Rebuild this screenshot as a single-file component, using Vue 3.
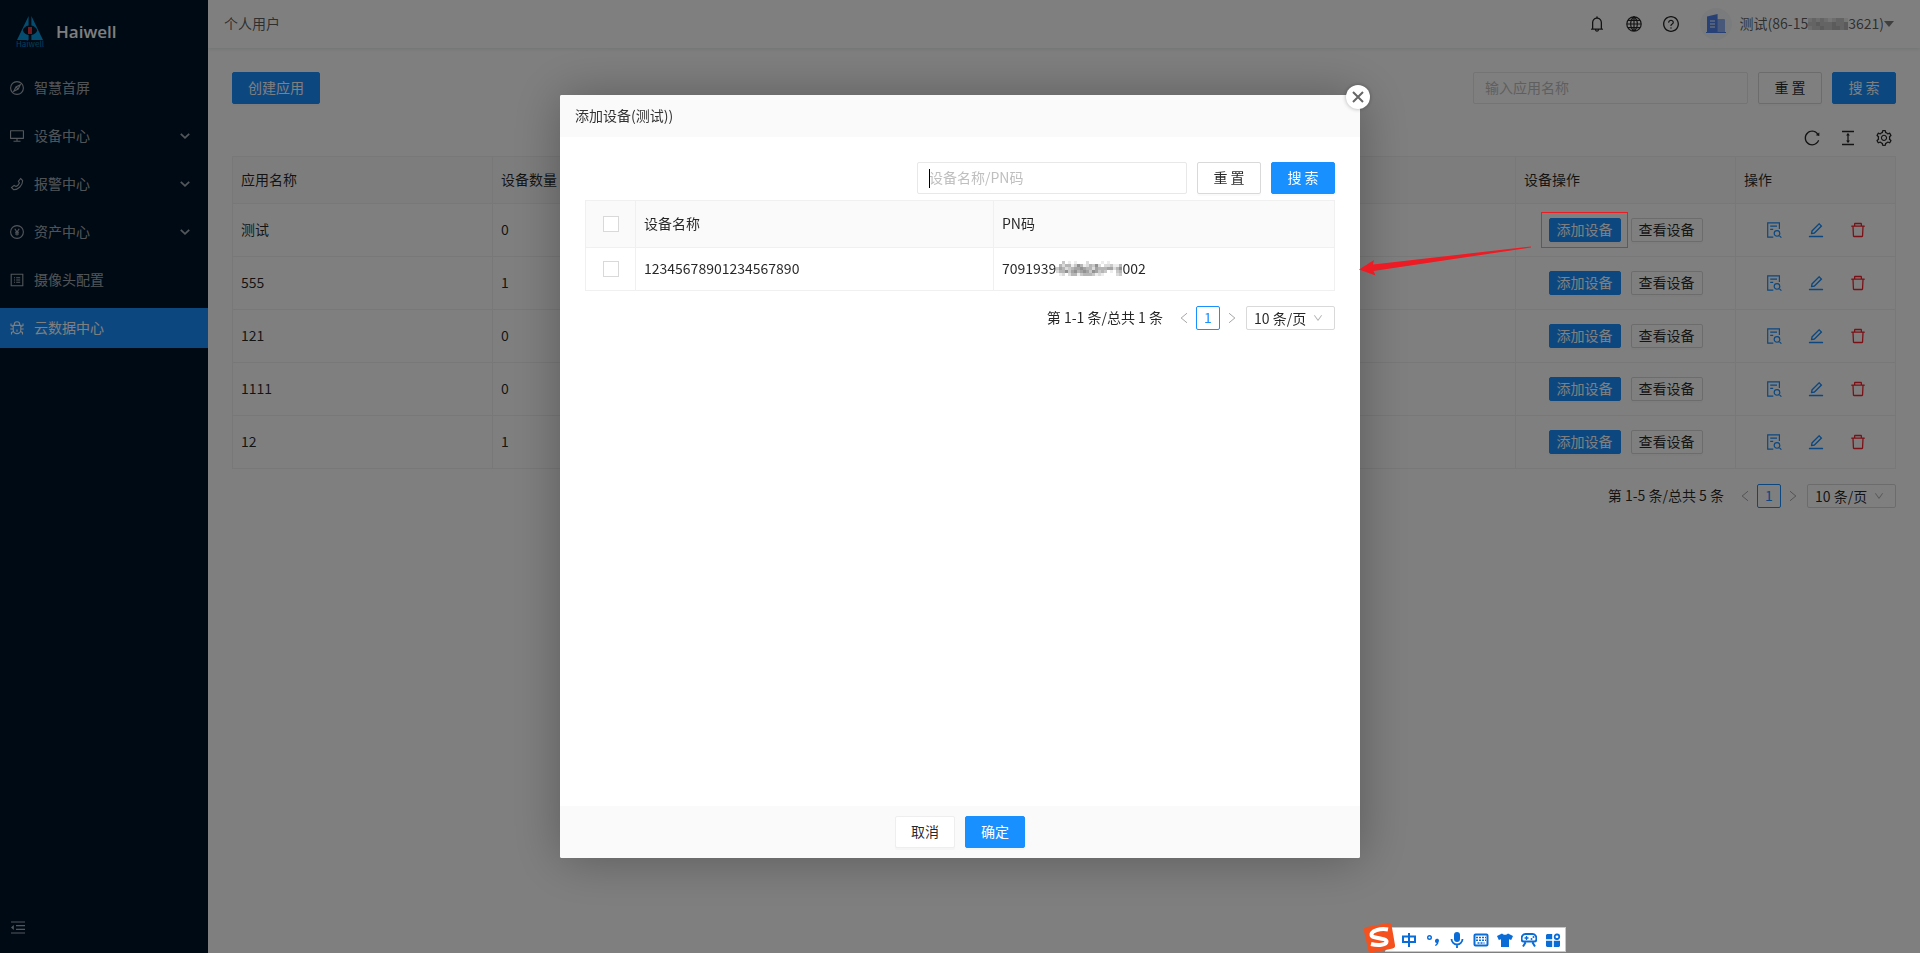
<script setup>
import { h, ref } from 'vue'

const F = '64 64 896 896'
const icons = {
  bell: { box: F, fill: 'M816 768h-24V428c0-141.1-104.3-257.8-240-277.2V112c0-22.1-17.9-40-40-40s-40 17.9-40 40v38.8C336.3 170.2 232 286.9 232 428v340h-24c-17.7 0-32 14.3-32 32v32c0 4.4 3.6 8 8 8h216c0 61.8 50.2 112 112 112s112-50.2 112-112h216c4.4 0 8-3.6 8-8v-32c0-17.7-14.3-32-32-32zM512 888c-26.5 0-48-21.5-48-48h96c0 26.5-21.5 48-48 48zM304 768V428c0-55.6 21.6-107.8 60.9-147.1S456.4 220 512 220c55.6 0 107.8 21.6 147.1 60.9S720 372.4 720 428v340H304z' },
  help: { box: F, fill: 'M512 64C264.6 64 64 264.6 64 512s200.6 448 448 448 448-200.6 448-448S759.4 64 512 64zm0 820c-205.4 0-372-166.6-372-372s166.6-372 372-372 372 166.6 372 372-166.6 372-372 372zM623.6 316.7C593.6 290.4 554 276 512 276s-81.6 14.5-111.6 40.7C369.2 344 352 380.7 352 420v7.6c0 4.4 3.6 8 8 8h48c4.4 0 8-3.6 8-8V420c0-44.1 43.1-80 96-80s96 35.9 96 80c0 31.1-22 59.6-56.1 72.7-21.2 8.1-39.2 22.3-52.1 40.9-13.1 19-19.9 41.8-19.9 64.9V620c0 4.4 3.6 8 8 8h48c4.4 0 8-3.6 8-8v-22.7a48.3 48.3 0 0 1 30.9-44.8c59-22.7 97.1-74.7 97.1-132.5.1-39.3-17.1-76-48.3-103.3zM472 732a40 40 0 1 0 80 0 40 40 0 1 0-80 0z' },
  globe: { box: '0 0 16 16', stroke: 'M8 .8a7.2 7.2 0 1 0 0 14.4A7.2 7.2 0 1 0 8 .8zM8 .8C3.6 4 3.6 12 8 15.2M8 .8c4.4 3.2 4.4 11.2 0 14.4M8 .8v14.4M.8 8h14.4M2 4.3h12M2 11.7h12', width: 1.2 },
  reload: { box: F, fill: 'M909.1 209.3l-56.4 44.1C775.8 155.1 656.2 92 521.9 92 290 92 102.3 279.5 102 511.5 101.7 743.7 289.8 932 521.9 932c181.3 0 335.8-115 394.6-276.1 1.5-4.2-.7-8.9-4.9-10.3l-56.7-19.5a8 8 0 0 0-10.1 4.8c-1.8 5-3.8 10-5.9 14.9-17.3 41-42.1 77.8-73.7 109.4A344.77 344.77 0 0 1 655.9 829c-42.3 17.9-87.4 27-133.8 27-46.5 0-91.5-9.1-133.8-27A341.5 341.5 0 0 1 279 755.2a342.16 342.16 0 0 1-73.7-109.4c-17.9-42.4-27-87.4-27-133.9s9.1-91.5 27-133.9c17.3-41 42.1-77.8 73.7-109.4 31.6-31.6 68.4-56.4 109.3-73.8 42.3-17.9 87.4-27 133.8-27 46.5 0 91.5 9.1 133.8 27a341.5 341.5 0 0 1 109.3 73.8c9.9 9.9 19.2 20.4 27.8 31.4l-60.2 47a8 8 0 0 0 3 14.1l175.6 43c5 1.2 9.9-2.6 9.9-7.7l.8-180.9c-.1-6.6-7.8-10.3-13-6.2z' },
  height: { box: F, fill: 'M840 836H184c-4.4 0-8 3.6-8 8v60c0 4.4 3.6 8 8 8h656c4.4 0 8-3.6 8-8v-60c0-4.4-3.6-8-8-8zm0-724H184c-4.4 0-8 3.6-8 8v60c0 4.4 3.6 8 8 8h656c4.4 0 8-3.6 8-8v-60c0-4.4-3.6-8-8-8zM610.8 378c6 0 9.4-7 5.7-11.7L515.7 238.7a7.14 7.14 0 0 0-11.3 0L403.6 366.3a7.23 7.23 0 0 0 5.7 11.7H476v268h-62.8c-6 0-9.4 7-5.7 11.7l100.8 127.5c2.9 3.7 8.5 3.7 11.3 0l100.8-127.5c3.7-4.7.4-11.7-5.7-11.7H548V378h62.8z' },
  setting: { box: F, fill: 'M924.8 625.7l-65.5-56c3.1-19 4.7-38.4 4.7-57.8s-1.6-38.8-4.7-57.8l65.5-56a32.03 32.03 0 0 0 9.3-35.2l-.9-2.6a443.74 443.74 0 0 0-79.7-137.9l-1.8-2.1a32.12 32.12 0 0 0-35.1-9.5l-81.3 28.9c-30-24.6-63.5-44-99.7-57.6l-15.7-85a32.05 32.05 0 0 0-25.8-25.7l-2.7-.5c-52.1-9.4-106.9-9.4-159 0l-2.7.5a32.05 32.05 0 0 0-25.8 25.7l-15.8 85.4a351.86 351.86 0 0 0-99 57.4l-81.9-29.1a32 32 0 0 0-35.1 9.5l-1.8 2.1a446.02 446.02 0 0 0-79.7 137.9l-.9 2.6c-4.5 12.5-.8 26.5 9.3 35.2l66.3 56.6c-3.1 18.8-4.6 38-4.6 57.1 0 19.2 1.5 38.4 4.6 57.1L99 625.5a32.03 32.03 0 0 0-9.3 35.2l.9 2.6c18.1 50.4 44.9 96.9 79.7 137.9l1.8 2.1a32.12 32.12 0 0 0 35.1 9.5l81.9-29.1c29.8 24.5 63.1 43.9 99 57.4l15.8 85.4a32.05 32.05 0 0 0 25.8 25.7l2.7.5a449.4 449.4 0 0 0 159 0l2.7-.5a32.05 32.05 0 0 0 25.8-25.7l15.7-85a350 350 0 0 0 99.7-57.6l81.3 28.9a32 32 0 0 0 35.1-9.5l1.8-2.1c34.8-41.1 61.6-87.5 79.7-137.9l.9-2.6c4.5-12.3.8-26.3-9.3-35zM788.3 465.9c2.5 15.1 3.8 30.6 3.8 46.1s-1.3 31-3.8 46.1l-6.6 40.1 74.7 63.9a370.03 370.03 0 0 1-42.6 73.6L721 702.8l-31.4 25.8c-23.9 19.6-50.5 35-79.3 45.8l-38.1 14.3-17.9 97a377.5 377.5 0 0 1-85 0l-17.9-97.2-37.8-14.5c-28.5-10.8-55-26.2-78.7-45.7l-31.4-25.9-93.4 33.2c-17-22.9-31.2-47.6-42.6-73.6l75.5-64.5-6.5-40c-2.4-14.9-3.7-30.3-3.7-45.5 0-15.3 1.2-30.6 3.7-45.5l6.5-40-75.5-64.5c11.3-26.1 25.6-50.7 42.6-73.6l93.4 33.2 31.4-25.9c23.7-19.5 50.2-34.9 78.7-45.7l37.9-14.3 17.9-97.2c28.1-3.2 56.8-3.2 85 0l17.9 97 38.1 14.3c28.7 10.8 55.4 26.2 79.3 45.8l31.4 25.8 92.8-32.9c17 22.9 31.2 47.6 42.6 73.6L781.8 426l6.5 39.9zM512 326c-97.2 0-176 78.8-176 176s78.8 176 176 176 176-78.8 176-176-78.8-176-176-176zm79.2 255.2A111.6 111.6 0 0 1 512 614c-29.9 0-58-11.7-79.2-32.8A111.6 111.6 0 0 1 400 502c0-29.9 11.7-58 32.8-79.2C454 401.6 482.1 390 512 390c29.9 0 58 11.6 79.2 32.8A111.6 111.6 0 0 1 624 502c0 29.9-11.7 58-32.8 79.2z' },
  trash: { box: F, fill: 'M360 184h-8c4.4 0 8-3.6 8-8v8h304v-8c0 4.4 3.6 8 8 8h-8v72h72v-80c0-35.3-28.7-64-64-64H352c-35.3 0-64 28.7-64 64v80h72v-72zm504 72H160c-17.7 0-32 14.3-32 32v32c0 4.4 3.6 8 8 8h60.4l24.7 523c1.6 34.1 29.8 61 63.9 61h454c34.2 0 62.3-26.8 63.9-61l24.7-523H888c4.4 0 8-3.6 8-8v-32c0-17.7-14.3-32-32-32zM731.3 840H292.7l-24.2-512h487l-24.2 512z' },
  edit: { box: F, fill: 'M257.7 752c2 0 4-.2 6-.5L431.9 722c2-.4 3.9-1.3 5.3-2.8l423.9-423.9a9.96 9.96 0 0 0 0-14.1L694.9 114.9c-1.9-1.9-4.4-2.9-7.1-2.9s-5.2 1-7.1 2.9L256.8 538.8c-1.5 1.5-2.4 3.3-2.8 5.3l-29.5 168.2a33.5 33.5 0 0 0 9.4 29.8c6.6 6.4 14.9 9.9 23.8 9.9zm67.4-174.4L687.8 215l73.3 73.3-362.7 362.6-88.9 15.7 15.6-89zM880 836H144c-17.7 0-32 14.3-32 32v36c0 4.4 3.6 8 8 8h784c4.4 0 8-3.6 8-8v-36c0-17.7-14.3-32-32-32z' },
  search: { box: '0 0 16 16', stroke: 'M13.4 7V.9H1.7v14.2h5.6M4.2 4.2h6.8M4.2 7.3h3M11 8.6a2.8 2.8 0 1 0 0 5.6 2.8 2.8 0 1 0 0-5.6zM13 13.4l2.4 2.2', width: 1.2 },
  down: { box: F, fill: 'M884 256h-75c-5.1 0-9.9 2.5-12.9 6.6L512 654.2 227.9 262.6c-3-4.1-7.8-6.6-12.9-6.6h-75c-6.5 0-10.3 7.4-6.5 12.7l352.6 486.1c12.8 17.6 39 17.6 51.7 0l352.6-486.1c3.9-5.3.1-12.7-6.4-12.7z' },
  chevron: { box: '0 0 10 10', stroke: 'M.8 2.8 5 6.8 9.2 2.8', width: 1.8 },
  prev: { box: '0 0 12 12', stroke: 'M9 1.2 3.200 6 9 10.8', width: 1 },
  next: { box: '0 0 12 12', stroke: 'M3 1.2 8.800 6 3 10.8', width: 1 },
  compass: { box: '0 0 14 14', stroke: 'M7 .6a6.4 6.4 0 1 0 0 12.8A6.4 6.4 0 1 0 7 .6zM10.3 3.8 8.2 8 3.8 10.3 6 6zM6.2 6.2l1.8 1.8', width: 1.1 },
  desktop: { box: F, fill: 'M928 140H96c-17.7 0-32 14.3-32 32v496c0 17.7 14.3 32 32 32h380v112H304c-8.8 0-16 7.2-16 16v48c0 4.4 3.6 8 8 8h432c4.4 0 8-3.6 8-8v-48c0-8.8-7.2-16-16-16H548V700h380c17.7 0 32-14.3 32-32V172c0-17.7-14.3-32-32-32zm-40 488H136V212h752v416z' },
  phone: { box: '0 0 14 14', stroke: 'M10.6 1.5 12.7 3.6C12.6 8.6 8.3 12.6 3.6 12.7L1.5 10.6 4.2 8.4 6 9.4C7.5 8.8 8.8 7.5 9.4 6L8.4 4.2z', width: 1.1 },
  yuan: { box: '0 0 14 14', stroke: 'M7 .6a6.4 6.4 0 1 0 0 12.8A6.4 6.4 0 1 0 7 .6zM4.8 3.8 7 7l2.2-3.2M7 7v3.6M5 7.3h4M5 9h4', width: 1.1 },
  profile: { box: '0 0 14 14', stroke: 'M1.2 1.2h11.6v11.6H1.2zM4 4.8h1M6.2 4.8h4M4 7h1M6.2 7h4M4 9.2h1M6.2 9.2h4', width: 1.1 },
  bug: { box: '0 0 14 14', stroke: 'M4.3 4.2V3.4a2.7 2.7 0 0 1 5.4 0v.8M3.2 4.4h7.6v4.4a3.8 3.8 0 0 1-7.6 0zM3.2 5.5 1 4.6V2.4M10.8 5.5 13 4.6V2.4M.3 8h2.9M10.8 8h2.9M3.6 10.4 1.5 11.4v2M10.4 10.4l2.1 1v2M7 8.4v2.4', width: 1.1 },
  fold: { box: '0 0 16 16', stroke: 'M1 2h14M6 5.6h9M6 9.4h9M1 13h14', fill: 'M3.8 5v5L1 7.5z', width: 1.2 }
}

const Icon = ({ name }) => {
  const d = icons[name]
  return h('svg', { viewBox: d.box, 'aria-hidden': 'true' }, [
    d.fill && h('path', { d: d.fill, fill: 'currentColor' }),
    d.stroke && h('path', { d: d.stroke, fill: 'none', stroke: 'currentColor', 'stroke-width': d.width })
  ])
}
Icon.props = ['name']

// Pixelated strip hiding private digits: each digit is a darkness level.
const Mosaic = ({ rows, cell }) =>
  h('svg', { width: rows[0].length * cell, height: rows.length * cell, 'aria-hidden': 'true' },
    rows.flatMap((row, y) => [...row].map((v, x) =>
      h('rect', { x: x * cell, y: y * cell, width: cell, height: cell, fill: '#000', 'fill-opacity': Number(v) / 14 }))))
Mosaic.props = ['rows', 'cell']

const phoneMask = ['2323212331', '3343334334', '2334334434']
const pnMask = [
  '0030101000200001010000',
  '0424413641243620223114',
  '3542345565442544455246',
  '2446356456536534301034',
  '0120244134443121000023'
]

const menu = [
  { label: '智慧首屏', icon: 'compass' },
  { label: '设备中心', icon: 'desktop', sub: true },
  { label: '报警中心', icon: 'phone', sub: true },
  { label: '资产中心', icon: 'yuan', sub: true },
  { label: '摄像头配置', icon: 'profile' },
  { label: '云数据中心', icon: 'bug', active: true }
]
const apps = [
  { name: '测试', count: 0 },
  { name: '555', count: 1 },
  { name: '121', count: 0 },
  { name: '1111', count: 0 },
  { name: '12', count: 1 }
]
const appName = ref('')
const device = ref('')
</script>

<template>
  <div class="layout">
    <aside class="sider">
      <div class="brand">
        <svg class="logo" viewBox="0 0 28 32" aria-hidden="true">
          <path d="M12.600 0v9.600C9.800 10 7.600 12 6.800 14.400c.8 2.400 3 4.200 5.800 4.600V24H1z" fill="#0a9be0" />
          <path d="M15.400 0v9.600c2.800.4 5 2.400 5.800 4.800-.8 2.400-3 4.200-5.800 4.600V24H27z" fill="#0a9be0" />
          <path d="M12 11h4v7h-4z" fill="#e8343c" />
          <text x="14" y="31" font-size="8" text-anchor="middle" fill="#0a80bd">Haiwell</text>
        </svg>
        <h1>Haiwell</h1>
      </div>
      <nav>
        <a v-for="m in menu" :key="m.label" href="#" class="item" :class="{ active: m.active }">
          <Icon :name="m.icon" class="i14" />
          <span>{{ m.label }}</span>
          <Icon v-if="m.sub" name="chevron" class="i10" />
        </a>
      </nav>
      <button class="fold" aria-label="收起菜单"><Icon name="fold" class="i16" /></button>
    </aside>

    <div class="main">
      <header class="top">
        <span class="lift">个人用户</span>
        <div class="tools">
          <button aria-label="通知"><Icon name="bell" class="i16" /></button>
          <button aria-label="语言"><Icon name="globe" class="i16" /></button>
          <button aria-label="帮助"><Icon name="help" class="i16" /></button>
          <button class="user">
            <svg class="avatar" viewBox="0 0 32 32" aria-hidden="true">
              <circle cx="16" cy="16" r="16" fill="#f5f6f8" />
              <path d="M17 11h7a1 1 0 0 1 1 1v12h-8z" fill="#8fb0f5" />
              <path d="M7 8.500 17.600 6v19H7zM6 24h20v1H6z" fill="#4f83ee" />
              <path d="M10 13h5M10 16h5M10 19h5" stroke="#fff" stroke-width="1.200" />
            </svg>
            <span class="lift">测试(86-15</span><Mosaic :rows="phoneMask" :cell="4" /><span class="lift">3621)</span>
            <i class="caret"></i>
          </button>
        </div>
      </header>

      <main class="content">
        <div class="bar">
          <button class="btn primary">创建应用</button>
          <form class="query" @submit.prevent>
            <input v-model="appName" class="field wide" placeholder="输入应用名称" aria-label="应用名称">
            <button type="reset" class="btn">重 置</button>
            <button class="btn primary">搜 索</button>
          </form>
        </div>
        <div class="options">
          <button aria-label="刷新"><Icon name="reload" class="i16" /></button>
          <button aria-label="密度"><Icon name="height" class="i16" /></button>
          <button aria-label="列设置"><Icon name="setting" class="i16" /></button>
        </div>
        <table class="grid apps">
          <colgroup><col class="c-name"><col><col class="c-dev"><col class="c-op"></colgroup>
          <thead>
            <tr><th>应用名称</th><th>设备数量</th><th>设备操作</th><th>操作</th></tr>
          </thead>
          <tbody>
            <tr v-for="a in apps" :key="a.name">
              <td>{{ a.name }}</td>
              <td>{{ a.count }}</td>
              <td class="flat">
                <div class="pair">
                  <button class="btn small primary">添加设备</button>
                  <button class="btn small">查看设备</button>
                </div>
              </td>
              <td class="flat">
                <div class="acts">
                  <button aria-label="详情"><Icon name="search" class="i16" /></button>
                  <button aria-label="编辑"><Icon name="edit" class="i16" /></button>
                  <button class="danger" aria-label="删除"><Icon name="trash" class="i16" /></button>
                </div>
              </td>
            </tr>
          </tbody>
        </table>
        <div class="pager">
          <span class="total">第 1-5 条/总共 5 条</span>
          <button class="arrow" aria-label="上一页"><Icon name="prev" class="i12" /></button>
          <button class="page">1</button>
          <button class="arrow" aria-label="下一页"><Icon name="next" class="i12" /></button>
          <label class="size">
            <select aria-label="每页条数"><option>10 条/页</option></select>
            <Icon name="down" class="i10" />
          </label>
        </div>
      </main>
    </div>

    <div class="mask">
      <section class="dialog" role="dialog" aria-labelledby="dlg-title">
        <button class="close" aria-label="关闭">
          <svg viewBox="0 0 12 12" aria-hidden="true"><path d="M1 1l10 10M11 1 1 11" stroke="#666" stroke-width="2" /></svg>
        </button>
        <h2 id="dlg-title">添加设备(测试))</h2>
        <div class="body">
          <form class="query" @submit.prevent>
            <span class="focus"><input v-model="device" class="field" placeholder="设备名称/PN码" aria-label="设备名称/PN码"></span>
            <button type="reset" class="btn">重 置</button>
            <button class="btn primary">搜 索</button>
          </form>
          <table class="grid devices">
            <colgroup><col class="c-check"><col class="c-dname"><col></colgroup>
            <thead>
              <tr><th class="flat"><input type="checkbox" aria-label="全选"></th><th>设备名称</th><th>PN码</th></tr>
            </thead>
            <tbody>
              <tr>
                <td class="flat"><input type="checkbox" aria-label="选择 12345678901234567890"></td>
                <td>12345678901234567890</td>
                <td><div class="pn"><span>7091939</span><Mosaic :rows="pnMask" :cell="3" /><span>002</span></div></td>
              </tr>
            </tbody>
          </table>
          <div class="pager">
            <span class="total">第 1-1 条/总共 1 条</span>
            <button class="arrow" aria-label="上一页"><Icon name="prev" class="i12" /></button>
            <button class="page">1</button>
            <button class="arrow" aria-label="下一页"><Icon name="next" class="i12" /></button>
            <label class="size">
              <select aria-label="每页条数"><option>10 条/页</option></select>
              <Icon name="down" class="i10" />
            </label>
          </div>
        </div>
        <footer>
          <button class="btn foot">取消</button>
          <button class="btn foot primary">确定</button>
        </footer>
      </section>
    </div>

    <div class="callout"></div>
    <svg class="pointer" viewBox="0 0 176 40" aria-hidden="true">
      <path d="M1 29.500 16 20l-1 4.500L173 6.500v1L15.500 31l2 4.500z" fill="#ed1c24" />
    </svg>

    <div class="ime">
      <svg class="sogou" viewBox="0 0 32 30" aria-hidden="true">
        <path d="M4 4 25 0a3 3 0 0 1 3.500 2L32 22a3 3 0 0 1-2.500 3.500L9 30a3 3 0 0 1-3.500-2L1 8a3 3 0 0 1 3-4z" fill="#f4511e" />
        <path d="M25 6.500C17 5 8 8 8.500 12c.4 4 15 2.500 15 6.500 0 3.500-8 4.500-15.500 2.500" fill="none" stroke="#fff" stroke-width="4" />
      </svg>
      <svg viewBox="0 0 16 16" aria-hidden="true"><path d="M2 4.500h12v5.500H2zM8 1v14" fill="none" stroke="#0a6cd6" stroke-width="2" /></svg>
      <svg viewBox="0 0 16 16" aria-hidden="true"><circle cx="4.500" cy="5.500" r="1.800" fill="none" stroke="#0a6cd6" stroke-width="1.400" /><path d="M10 8.500a2 2 0 1 1 3.500 1.500c0 2-1.500 3.500-3 4l-.5-1c1-.5 1.500-1.200 1.600-2A2 2 0 0 1 10 8.500z" fill="#0a6cd6" /></svg>
      <svg viewBox="0 0 16 16" aria-hidden="true"><rect x="5" y="0" width="6" height="10" rx="3" fill="#0a6cd6" /><path d="M2.500 7a5.500 5.500 0 0 0 11 0M8 12.500V16" fill="none" stroke="#0a6cd6" stroke-width="1.800" /></svg>
      <svg viewBox="0 0 16 16" aria-hidden="true"><rect x="1.500" y="2.500" width="13" height="11" rx="1" fill="none" stroke="#0a6cd6" stroke-width="2" /><path d="M3 5.500h10M3 8.300h10M4.500 11h7" stroke="#0a6cd6" stroke-width="1.600" stroke-dasharray="2 1" /></svg>
      <svg viewBox="0 0 16 16" aria-hidden="true"><path d="M5 1.500c1.500 1.800 4.500 1.800 6 0L16 4l-1.800 4-2.200-.8V15H4V7.200L1.800 8 0 4z" fill="#0a6cd6" /></svg>
      <svg viewBox="0 0 16 16" aria-hidden="true"><path d="M4.500 2h7C14 2 15.500 4.500 15.500 7c0 1.500-1 2.500-2.500 2.500H3C1.500 9.500.5 8.500.5 7 .5 4.500 2 2 4.500 2zM2 14.500l2.500-4M14 14.500l-2.500-4" fill="#fff" stroke="#0a6cd6" stroke-width="2" /><path d="M3.500 6h4M5.500 4v4" stroke="#0a6cd6" stroke-width="1.300" /><circle cx="10.500" cy="7" r="1" fill="#0a6cd6" /><circle cx="12.500" cy="5" r="1" fill="#0a6cd6" /></svg>
      <svg viewBox="0 0 16 16" aria-hidden="true"><path d="M2 2h5.200v5.200H1V3zM1 8.800h6.200V15H2l-1-1zM8.800 8.800H15V14l-1 1H8.800z" fill="#0a6cd6" /><rect x="9.700" y="2.500" width="4.500" height="4.500" rx="2" fill="none" stroke="#0a6cd6" stroke-width="1.800" /></svg>
    </div>
  </div>
</template>

<style>
body { margin: 0; }
</style>

<style scoped>
* { box-sizing: border-box; }
.layout {
  display: flex;
  min-height: 100vh;
  font: 14px/22px "Noto Sans CJK SC", "Liberation Sans", sans-serif;
  color: rgba(0, 0, 0, .85);
  background: #fff;
}
button, input, select { font: inherit; color: inherit; margin: 0; }
button { padding: 0; border: 0; background: none; cursor: pointer; }
svg { flex: none; display: block; }
.i10 { width: 10px; height: 10px; }
.i12 { width: 12px; height: 12px; }
.i14 { width: 14px; height: 14px; }
.i16 { width: 16px; height: 16px; }
.lift { padding-bottom: 2px; }

.sider { flex: none; width: 208px; background: #001529; display: flex; flex-direction: column; }
.brand { height: 64px; padding: 0 16px; display: flex; align-items: center; gap: 12px; }
.logo { width: 28px; height: 32px; }
h1 { margin: 0; font: 600 17px/32px "Open Sans", sans-serif; color: #fff; }
nav { flex: 1; display: flex; flex-direction: column; gap: 8px; padding-top: 4px; }
.item {
  height: 40px; padding: 0 18px 0 10px; display: flex; align-items: center; gap: 10px;
  color: rgba(255, 255, 255, .65); text-decoration: none;
}
.item span { flex: 1; padding-bottom: 2px; }
.active { background: #1890ff; color: #fff; }
.fold { height: 48px; padding: 0 10px 2px; color: rgba(255, 255, 255, .65); }

.main { flex: 1; min-width: 0; }
.top {
  height: 48px; padding: 0 26px 0 16px; display: flex; align-items: center; justify-content: space-between;
  box-shadow: 0 1px 4px rgba(0, 21, 41, .12); color: rgba(0, 0, 0, .65);
}
.tools { display: flex; align-items: center; gap: 21px; color: rgba(0, 0, 0, .85); }
.user { display: flex; align-items: center; color: rgba(0, 0, 0, .65); }
.avatar { width: 32px; height: 32px; margin-right: 8px; }
.caret { border: 5px solid transparent; border-top: 6px solid rgba(0, 0, 0, .5); border-bottom: 0; }

.content { padding: 24px; }
.bar { display: flex; justify-content: space-between; }
.query { display: flex; justify-content: flex-end; gap: 10px; }
.btn {
  height: 32px; padding: 0 15px 2px; border: 1px solid #d9d9d9; border-radius: 2px; background: #fff;
  white-space: nowrap; box-shadow: 0 2px 0 rgba(0, 0, 0, .02); line-height: 22px;
}
.query .btn { width: 64px; }
.primary { background: #1890ff; border-color: #1890ff; color: #fff; }
.small { height: 24px; width: 72px; padding: 0 0 2px; line-height: 20px; }
.field {
  width: 270px; height: 32px; padding: 0 11px 2px; border: 1px solid #e8e8e8; border-radius: 2px; outline: 0; background: #fff;
}
.wide { width: 275px; }
.field::placeholder { color: #bfbfbf; }
.focus { position: relative; }
.focus::before { content: ""; position: absolute; left: 12px; top: 7px; width: 1px; height: 19px; background: #000; }
.options { height: 52px; padding: 26px 4px 10px; display: flex; justify-content: flex-end; gap: 20px; }

.grid { width: 100%; border-collapse: collapse; table-layout: fixed; }
.grid th, .grid td { border: 1px solid #f0f0f0; padding: 0 8px 2px; text-align: left; font-weight: 400; }
.grid th { background: #fafafa; height: 47px; }
.grid .flat { padding-bottom: 0; }
.apps td { height: 53px; }
.c-name { width: 260px; }
.c-dev { width: 220px; }
.c-op { width: 160px; }
.pair { display: flex; justify-content: center; gap: 10px; }
.acts { display: flex; justify-content: center; gap: 26px; color: #1890ff; }
.danger { color: #f5222d; }

.pager { display: flex; justify-content: flex-end; align-items: center; padding-top: 15px; }
.total { margin-right: 9px; padding-bottom: 2px; }
.arrow { width: 24px; height: 24px; display: grid; place-items: center; color: rgba(0, 0, 0, .35); }
.page { width: 24px; height: 24px; border: 1px solid #1890ff; border-radius: 2px; color: #1890ff; line-height: 20px; padding-bottom: 2px; }
.size {
  width: 89px; height: 24px; margin-left: 2px; padding: 0 11px 0 7px; border: 1px solid #d9d9d9; border-radius: 2px;
  display: flex; align-items: center; background: #fff;
}
.size select { flex: 1; min-width: 0; appearance: none; border: 0; padding: 0 0 2px; background: none; outline: 0; height: 22px; }
.size svg { color: rgba(0, 0, 0, .3); }

.mask { position: fixed; inset: 0; background: rgba(0, 0, 0, .5); display: grid; place-items: center; }
.dialog {
  position: relative; width: 800px; height: 80vh; display: flex; flex-direction: column;
  background: #fff; border-radius: 2px; box-shadow: 1px 1px 50px rgba(0, 0, 0, .3);
}
h2 { margin: 0; padding: 0 15px 2px; height: 42px; font-size: 14px; font-weight: 400; line-height: 40px; background: #fafafa; color: #333; border-radius: 2px 2px 0 0; }
.close {
  position: absolute; top: -10px; right: -10px; width: 24px; height: 24px; border-radius: 50%; background: #fff;
  display: grid; place-items: center; box-shadow: 0 0 4px rgba(0, 0, 0, .3);
}
.close svg { width: 12px; height: 12px; }
.body { flex: 1; padding: 25px; }
.devices { margin-top: 6px; }
.devices td { height: 43px; background: #fff; }
.c-check { width: 50px; }
.c-dname { width: 358px; }
.flat input { display: block; appearance: none; width: 16px; height: 16px; margin: 0 auto; border: 1px solid #d9d9d9; background: #fff; }
.pn { display: flex; align-items: center; }
.dialog footer { height: 52px; display: flex; align-items: center; justify-content: center; gap: 10px; background: #fafafa; border-radius: 0 0 2px 2px; }
.foot { width: 60px; padding: 0 0 2px; border-color: #eee; }
.foot.primary { border-color: #1890ff; }

.callout { position: fixed; top: 212px; right: 292px; width: 87px; height: 36px; border: 1px solid #ed1c24; }
.pointer { position: fixed; top: 240px; right: 386px; width: 176px; height: 40px; }
.ime {
  position: fixed; right: 354px; bottom: 1px; height: 25px; padding: 0 4px 0 1px; background: #fff; border: 1px solid #b9cbe0;
  display: flex; align-items: center; gap: 8px;
}
.ime svg { width: 16px; height: 16px; }
.ime .sogou { width: 32px; height: 30px; margin: -4px -2px 0 -24px; }
</style>
